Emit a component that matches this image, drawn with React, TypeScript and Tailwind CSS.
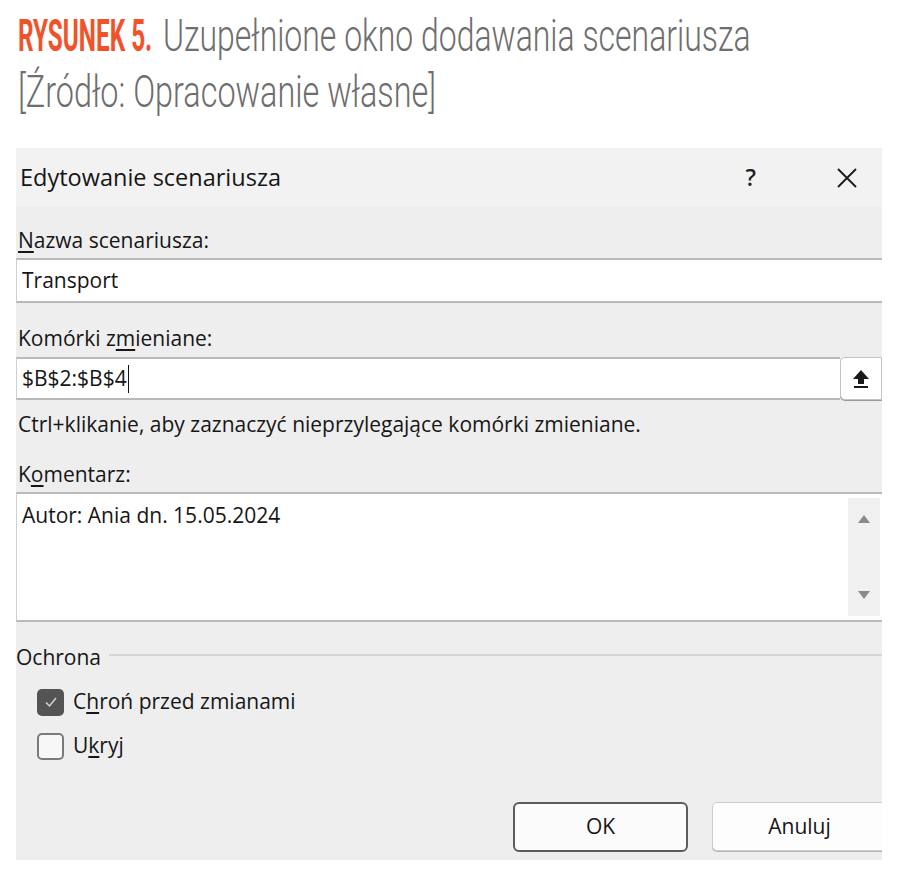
import type { ReactNode } from "react";

const ui = "font-['Open_Sans','Noto_Sans',sans-serif]";

function Squeeze({ w, s, children }: { w: string; s: string; children: ReactNode }) {
  return (
    <span className={`inline-block align-baseline ${w}`}>
      <span className={`inline-block origin-left whitespace-nowrap ${s}`}>{children}</span>
    </span>
  );
}

function UpArrow() {
  return (
    <svg width="18" height="20" viewBox="0 0 18 20">
      <path d="M9 1 L17 10 L12 10 L12 15 L6 15 L6 10 L1 10 Z" fill="#1a1a1a" />
      <rect x="2" y="17" width="14" height="2" fill="#1a1a1a" />
    </svg>
  );
}

function Label({ children, cls }: { children: ReactNode; cls: string }) {
  return <div className={`flex items-end pl-[2px] text-[21px] leading-[26px] text-[#161616] ${cls}`}>{children}</div>;
}

export default function App() {
  return (
    <div className="w-[908px] h-[888px] bg-white overflow-hidden">
      <div className="pt-[8px] pl-[18px] text-[45px] leading-[56px] font-['Roboto',sans-serif]">
        <div className="whitespace-nowrap">
          <Squeeze w="w-[145px]" s="scale-x-[0.54]">
            <span className="font-bold text-[#f0532a]">RYSUNEK 5.</span>
          </Squeeze>
          <Squeeze w="w-[600px]" s="scale-x-[0.71]">
            <span className="font-light text-[#6e6e6e]">Uzupełnione okno dodawania scenariusza</span>
          </Squeeze>
        </div>
        <div className="whitespace-nowrap">
          <Squeeze w="w-[425px]" s="scale-x-[0.72]">
            <span className="font-light text-[#6e6e6e]">[Źródło: Opracowanie własne]</span>
          </Squeeze>
        </div>
      </div>

      <div className={`mt-[28px] ml-[16px] w-[866px] h-[712px] overflow-hidden bg-[#eeeeee] ${ui}`}>
        <div className="h-[59px] flex items-center pl-[4px] pr-[24px] bg-[#f2f2f2]">
          <span className="text-[23.5px] text-[#161616]">Edytowanie scenariusza</span>
          <span className="ml-auto text-[23px] font-semibold text-[#222]">?</span>
          <svg className="ml-[80px]" width="22" height="22" viewBox="0 0 22 22">
            <path d="M2 2 L20 20 M20 2 L2 20" stroke="#1a1a1a" strokeWidth="1.8" />
          </svg>
        </div>

        <Label cls="h-[51px] pb-[5px]">
          <span>
            <span className="underline underline-offset-[3px]">N</span>azwa scenariusza:
          </span>
        </Label>
        <div className="h-[45px] bg-white border-y-2 border-[#b9b9b9] border-l border-l-[#cfcfcf] flex items-center pl-[5px] text-[21px] text-[#161616]">
          Transport
        </div>

        <Label cls="h-[54px] pb-[6px]">
          <span>
            Komórki z<span className="underline underline-offset-[3px]">m</span>ieniane:
          </span>
        </Label>
        <div className="h-[43px] flex">
          <div className="flex-1 bg-white border-y-2 border-[#b9b9b9] border-l border-l-[#cfcfcf] flex items-center pl-[5px] text-[21px] text-[#161616]">
            $B$2:$B$4
            <span className="ml-[1px] w-[1.5px] h-[28px] bg-[#111]" />
          </div>
          <div className="w-[42px] bg-white border border-[#c4c4c4] rounded-l-[5px] flex items-center justify-center shadow-[0_1px_0_#9a9a9a]">
            <UpArrow />
          </div>
        </div>

        <div className="h-[50px] flex items-center pl-[2px] text-[21px] text-[#161616]">
          Ctrl+klikanie, aby zaznaczyć nieprzylegające komórki zmieniane.
        </div>

        <Label cls="h-[42px] pb-[5px]">
          <span>
            K<span className="underline underline-offset-[3px]">o</span>mentarz:
          </span>
        </Label>
        <div className="h-[130px] bg-white border-y-2 border-[#b9b9b9] border-l border-l-[#cfcfcf] flex">
          <div className="flex-1 pl-[5px] pt-[7px] text-[21px] leading-[28px] text-[#161616]">Autor: Ania dn. 15.05.2024</div>
          <div className="w-[32px] my-[4px] mr-[2px] bg-[#f0f0f0] flex flex-col items-center justify-between py-[16px]">
            <svg width="14" height="10" viewBox="0 0 14 10">
              <path d="M7 1 L13 9 L1 9 Z" fill="#8a8a8a" />
            </svg>
            <svg width="14" height="10" viewBox="0 0 14 10">
              <path d="M1 1 L13 1 L7 9 Z" fill="#8a8a8a" />
            </svg>
          </div>
        </div>

        <div className="h-[58px] flex items-end pb-[10px] pl-0 text-[21px] leading-[26px] text-[#161616]">
          <span>Ochrona</span>
          <div className="flex-1 ml-[8px] mb-[14px] h-[2px] bg-[#d6d6d6]" />
        </div>

        <div className="h-[44px] flex items-center pl-[21px] gap-[9px] text-[21px] text-[#161616]">
          <div className="w-[27px] h-[27px] rounded-[5px] bg-[#545454] flex items-center justify-center">
            <svg width="14" height="12" viewBox="0 0 14 12">
              <path d="M2 6.5 L5.5 10 L12 2" fill="none" stroke="#d8d8d8" strokeWidth="1.4" />
            </svg>
          </div>
          <span>
            C<span className="underline underline-offset-[3px]">h</span>roń przed zmianami
          </span>
        </div>
        <div className="h-[44px] flex items-center pl-[21px] gap-[9px] text-[21px] text-[#161616]">
          <div className="w-[27px] h-[27px] rounded-[5px] border-2 border-[#7a7a7a] bg-[#f7f7f7]" />
          <span>
            U<span className="underline underline-offset-[3px]">k</span>ryj
          </span>
        </div>

        <div className="mt-[34px] flex gap-[24px] pl-[497px]">
          <div className="shrink-0 w-[175px] h-[50px] rounded-[6px] border-2 border-[#5c5c5c] bg-[#fbfbfb] flex items-center justify-center text-[21px] text-[#161616]">
            OK
          </div>
          <div className="shrink-0 w-[175px] h-[49px] rounded-[5px] border border-[#cdcdcd] bg-[#fdfdfd] flex items-center justify-center text-[21px] text-[#161616] shadow-[0_1px_0_#b5b5b5]">
            Anuluj
          </div>
        </div>
      </div>
    </div>
  );
}
